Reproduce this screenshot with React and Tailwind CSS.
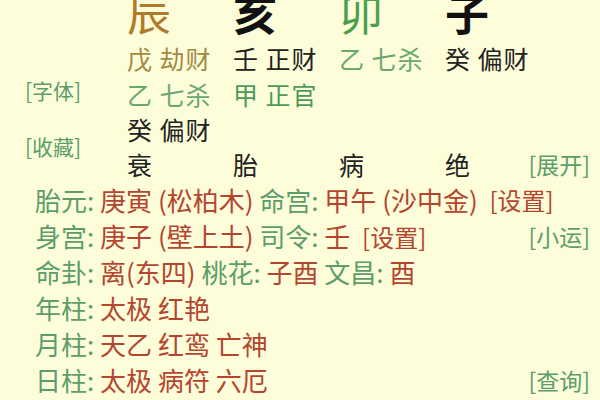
const cjk = { fontFamily: '"Noto Sans CJK SC", "Noto Sans", sans-serif' };

const G = 'text-[#5b9e6b]';
const R = 'text-[#b4452f]';

const Row = ({ children, className = '' }) => (
  <div className={`flex items-center h-[36px] text-[26px] leading-[36px] whitespace-pre ${className}`}>
    {children}
  </div>
);

export default function App() {
  return (
    <div className="w-[600px] h-[400px] overflow-hidden bg-[#fdfdda]" style={cjk}>
      <div className="flex">
        <div className="w-[127px] flex flex-col pl-[25px] text-[21px] text-[#5b9e6b]">
          <div className="h-[77px]" />
          <div className="leading-[26px]">[字体]</div>
          <div className="h-[30px]" />
          <div className="leading-[26px]">[收藏]</div>
        </div>
        <div className="flex-1 flex flex-col pr-[10px]">
          <div className="grid grid-cols-[106px_106px_106px_auto] h-[40px] -mt-[10px] mb-[10px] text-[44px] leading-[44px]">
            <span className="text-[#b07a2a]">辰</span>
            <span className="text-[#111] font-bold">亥</span>
            <span className="text-[#4aa04a]">卯</span>
            <span className="text-[#111] font-bold">子</span>
          </div>
          <div className="grid grid-cols-[106px_106px_106px_auto] h-[36px] text-[25px] leading-[36px] tracking-[1px]">
            <span className="text-[#a08a45]">戊 劫财</span>
            <span className="text-[#222]">壬 正财</span>
            <span className="text-[#6aa870]">乙 七杀</span>
            <span className="text-[#222]">癸 偏财</span>
          </div>
          <div className="grid grid-cols-[106px_106px_106px_auto] h-[36px] text-[25px] leading-[36px] tracking-[1px]">
            <span className="text-[#6aa870]">乙 七杀</span>
            <span className="text-[#4d9a5a]">甲 正官</span>
          </div>
          <div className="h-[34px] text-[25px] leading-[34px] text-[#222] tracking-[1px]">癸 偏财</div>
          <div className="flex items-center h-[36px] text-[25px] leading-[36px] text-[#222]">
            <div className="grid grid-cols-[106px_106px_106px_auto] flex-1">
              <span>衰</span>
              <span>胎</span>
              <span>病</span>
              <span>绝</span>
            </div>
            <span className={`${G} text-[23px]`}>[展开]</span>
          </div>
        </div>
      </div>
      <div className="flex flex-col pl-[35px] pr-[10px]">
        <Row>
          <span className={G}>胎元: </span>
          <span className={R}>庚寅 (松柏木) </span>
          <span className={G}>命宫: </span>
          <span className={R}>甲午 (沙中金)  </span>
          <span className={`${R} text-[24px]`}>[设置]</span>
        </Row>
        <Row className="justify-between">
          <span>
            <span className={G}>身宫: </span>
            <span className={R}>庚子 (壁上土) </span>
            <span className={G}>司令: </span>
            <span className={R}>壬  </span>
            <span className={`${R} text-[24px]`}>[设置]</span>
          </span>
          <span className={`${G} text-[23px]`}>[小运]</span>
        </Row>
        <Row>
          <span className={G}>命卦: </span>
          <span className={R}>离(东四) </span>
          <span className={G}>桃花: </span>
          <span className={R}>子酉 </span>
          <span className={G}>文昌: </span>
          <span className={R}>酉</span>
        </Row>
        <Row>
          <span className={G}>年柱: </span>
          <span className={R}>太极 红艳</span>
        </Row>
        <Row>
          <span className={G}>月柱: </span>
          <span className={R}>天乙 红鸾 亡神</span>
        </Row>
        <Row className="justify-between">
          <span>
            <span className={G}>日柱: </span>
            <span className={R}>太极 病符 六厄</span>
          </span>
          <span className={`${G} text-[23px]`}>[查询]</span>
        </Row>
      </div>
    </div>
  );
}
